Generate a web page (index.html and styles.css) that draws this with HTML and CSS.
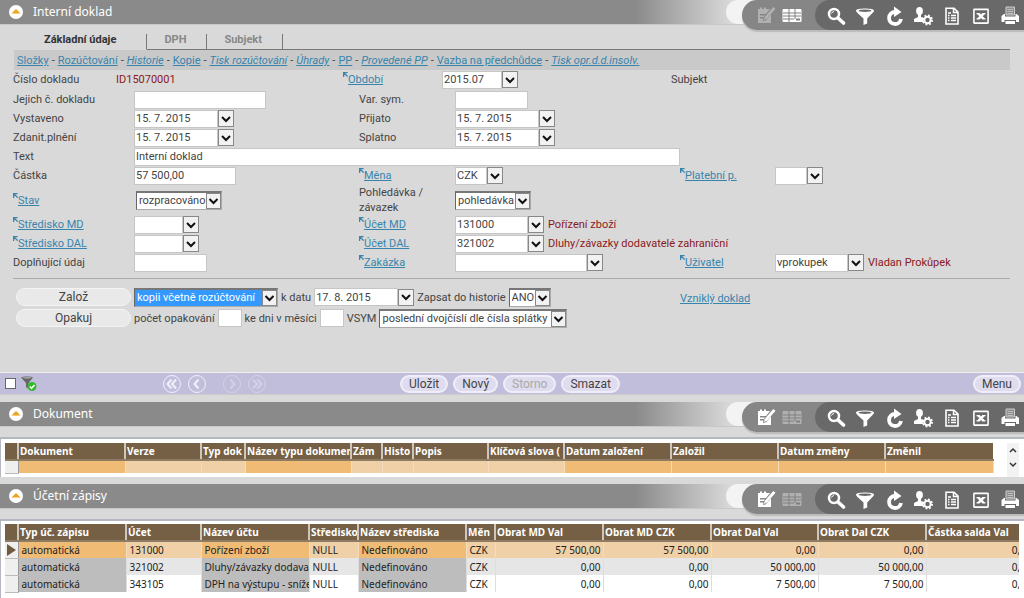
FILE: index.html
```
<!DOCTYPE html>
<html lang="cs">
<head>
<meta charset="utf-8">
<title>Interní doklad</title>
<link rel="stylesheet" href="styles.css">
</head>
<body>
<svg class="sprite" aria-hidden="true">
  <symbol id="i-edit" viewBox="0 0 20 20"><path fill="currentColor" d="M2 4h2V2.500h2V4h2V2.500h2V4h4l-4 5H4v1.500h5L8 12H4v1.500h3.500L7 16l3-.8 5-6V18H2z"/><path fill="currentColor" d="M17.300 2l2.200 1.800-8.600 10L8 15l.7-3z"/></symbol>
  <symbol id="i-table" viewBox="0 0 20 20"><rect x="0.500" y="4" width="19" height="13" rx="1" fill="currentColor"/><path d="M1 8h18M1 11h18M1 14h11M7 4v13M13 4v10" stroke="#808080" stroke-width="1"/><path d="M14 13.500h4v2h-4z" fill="#808080"/></symbol>
  <symbol id="i-search" viewBox="0 0 20 20"><circle cx="8" cy="8" r="5" fill="none" stroke="currentColor" stroke-width="2.500"/><path d="M12 12l5.500 5" stroke="currentColor" stroke-width="3.600" stroke-linecap="round"/><path d="M5.500 7.500q.8-2 2.500-2" stroke="currentColor" fill="none"/></symbol>
  <symbol id="i-filter" viewBox="0 0 20 20"><path fill="currentColor" d="M1 4.500C1 1.800 19 1.800 19 4.500c0 1-1 2-2 3l-4.800 5v5l-3.700 1.500v-6.500L3 7.500c-1-1-2-2-2-3z"/><ellipse cx="10" cy="4.700" rx="6.500" ry="1.300" fill="#696969"/></symbol>
  <symbol id="i-refresh" viewBox="0 0 20 20"><path d="M11 6a6 6 0 1 0 6 7" fill="none" stroke="currentColor" stroke-width="3.800"/><path d="M10 .5l7.500 5.500-7.500 5z" fill="currentColor"/></symbol>
  <symbol id="i-user" viewBox="0 0 20 20"><ellipse cx="6.500" cy="5" rx="3.400" ry="4" fill="currentColor"/><path d="M5 7h3v4l3 1-1 4H1v-3l4-2z" fill="currentColor"/><circle cx="14.500" cy="14" r="3.200" fill="none" stroke="currentColor" stroke-width="2"/><circle cx="14.500" cy="14" r="4.600" fill="none" stroke="currentColor" stroke-width="1.800" stroke-dasharray="1.800 1.812"/></symbol>
  <symbol id="i-doc" viewBox="0 0 20 20"><path d="M4 2.200h8l4 4V18H4z" fill="none" stroke="currentColor" stroke-width="1.600"/><path d="M11.500 2v4.500H16M6 7h3M6 9.500h1.500M9 9.500h5M6 12h1.500M9 12h5M6 14.500h1.500M9 14.500h5" fill="none" stroke="currentColor" stroke-width="1.500"/></symbol>
  <symbol id="i-xls" viewBox="0 0 20 20"><rect x="2.900" y="3.400" width="14.200" height="13.700" rx=".5" fill="none" stroke="currentColor" stroke-width="1.600"/><path d="M5.500 7h3.200L10 8.600 11.300 7h3.200v1.300h-.8l-2 2 2 2h.8v1.300h-3.200L10 12l-1.300 1.600H5.500v-1.300h.8l2-2-2-2h-.8z" fill="currentColor"/></symbol>
  <symbol id="i-print" viewBox="0 0 20 20"><path d="M6 1h8.500v8H6z" fill="#8c8c8c" stroke="#cfcfcf" stroke-width="1"/><path d="M7.500 3.500h5.500M7.500 5.500h5.500M7.500 7.500h5.500" stroke="#cfcfcf" stroke-width=".8"/><path d="M1.500 10L4 8h1v2.500h10.500V8h1l2.500 2v6h-3v-2H4.500v2h-3z" fill="currentColor"/><path d="M5.500 15h9.500v3H5.500z" fill="currentColor"/></symbol>
  <symbol id="i-up" viewBox="0 0 14 14"><circle cx="7" cy="7" r="7" fill="#fff"/><path d="M2.500 8.600L7 4l4.500 4.600z" fill="#eba21c"/></symbol>
  <symbol id="i-ref" viewBox="0 0 6 6"><path d="M.7 6V.7H5.500M1 1l4.500 4.500" fill="none" stroke="#3785ad" stroke-width="1.500"/></symbol>
  <symbol id="i-drop" viewBox="0 0 12 12"><path d="M2 4l4 4 4-4" fill="none" stroke="#111" stroke-width="2"/></symbol>
</svg>

<header class="bar">
  <button class="fold" aria-label="Sbalit"><svg><use href="#i-up"/></svg></button>
  <h1>Interní doklad</h1>
  <div class="tail"><div class="capsule">
    <button class="off" aria-label="Upravit"><svg><use href="#i-edit"/></svg></button>
    <button aria-label="Tabulka"><svg><use href="#i-table"/></svg></button>
    <div class="tools">
      <button aria-label="Hledat"><svg><use href="#i-search"/></svg></button>
      <button aria-label="Filtr"><svg><use href="#i-filter"/></svg></button>
      <button aria-label="Obnovit"><svg><use href="#i-refresh"/></svg></button>
      <button aria-label="Nastavení"><svg><use href="#i-user"/></svg></button>
      <button aria-label="Sestava"><svg><use href="#i-doc"/></svg></button>
      <button aria-label="Excel"><svg><use href="#i-xls"/></svg></button>
      <button aria-label="Tisk"><svg><use href="#i-print"/></svg></button>
    </div>
  </div></div>
</header>

<main class="form">
  <nav class="tabs">
    <a class="tab active" href="#">Základní údaje</a>
    <a class="tab" href="#">DPH</a>
    <a class="tab" href="#">Subjekt</a>
    <span class="rest"></span>
  </nav>
  <nav class="links">
    <a href="#">Složky</a><span>-</span><a href="#">Rozúčtování</a><span>-</span><a href="#"><i>Historie</i></a><span>-</span><a href="#">Kopie</a><span>-</span><a href="#"><i>Tisk rozúčtování</i></a><span>-</span><a href="#"><i>Úhrady</i></a><span>-</span><a href="#">PP</a><span>-</span><a href="#"><i>Provedené PP</i></a><span>-</span><a href="#">Vazba na předchůdce</a><span>-</span><a href="#"><i>Tisk opr.d.d.insolv.</i></a>
  </nav>

  <div class="grid head">
    <span>Číslo dokladu</span>
    <span class="note">ID15070001</span>
    <label for="obdobi"><svg class="ref"><use href="#i-ref"/></svg><a href="#">Období</a></label>
    <span class="combo"><input id="obdobi" class="w60" value="2015.07"><button aria-label="Vybrat"><svg><use href="#i-drop"/></svg></button></span>
    <span>Subjekt</span>
  </div>

  <div class="grid fields">
    <label class="c1" for="jejich">Jejich č. dokladu</label><span><input id="jejich" class="w132"></span>
    <label class="c3" for="vs">Var. sym.</label><span><input id="vs" class="w73"></span>

    <label class="c1" for="vyst">Vystaveno</label><span class="combo"><input id="vyst" class="w84" value="15. 7. 2015"><button aria-label="Vybrat"><svg><use href="#i-drop"/></svg></button></span>
    <label class="c3" for="prij">Přijato</label><span class="combo"><input id="prij" class="w84" value="15. 7. 2015"><button aria-label="Vybrat"><svg><use href="#i-drop"/></svg></button></span>

    <label class="c1" for="zdan">Zdanit.plnění</label><span class="combo"><input id="zdan" class="w84" value="15. 7. 2015"><button aria-label="Vybrat"><svg><use href="#i-drop"/></svg></button></span>
    <label class="c3" for="spl">Splatno</label><span class="combo"><input id="spl" class="w84" value="15. 7. 2015"><button aria-label="Vybrat"><svg><use href="#i-drop"/></svg></button></span>

    <label class="c1" for="text">Text</label><span class="span3"><input id="text" class="wfull" value="Interní doklad"></span>

    <label class="c1" for="castka">Částka</label><span><input id="castka" class="w102" value="57 500,00"></span>
    <label class="c3" for="mena"><svg class="ref"><use href="#i-ref"/></svg><a href="#">Měna</a></label><span class="combo"><input id="mena" class="w32" value="CZK"><button aria-label="Vybrat"><svg><use href="#i-drop"/></svg></button></span>
    <label for="plat"><svg class="ref"><use href="#i-ref"/></svg><a href="#">Platební p.</a></label><span class="combo"><input id="plat" class="w32"><button aria-label="Vybrat"><svg><use href="#i-drop"/></svg></button></span>

    <label class="c1" for="stav"><svg class="ref"><use href="#i-ref"/></svg><a href="#">Stav</a></label><span class="shift"><select id="stav" class="sel s86"><option>rozpracováno</option></select></span>
    <label class="c3" for="pohl">Pohledávka /<br>závazek</label><span><select id="pohl" class="sel s76"><option>pohledávka</option></select></span>

    <label class="c1" for="smd"><svg class="ref"><use href="#i-ref"/></svg><a href="#">Středisko MD</a></label><span class="combo"><input id="smd" class="w49"><button aria-label="Vybrat"><svg><use href="#i-drop"/></svg></button></span>
    <label class="c3" for="umd"><svg class="ref"><use href="#i-ref"/></svg><a href="#">Účet MD</a></label><span class="combo"><input id="umd" class="w73" value="131000"><button aria-label="Vybrat"><svg><use href="#i-drop"/></svg></button><span class="note">Pořízení zboží</span></span>

    <label class="c1" for="sdal"><svg class="ref"><use href="#i-ref"/></svg><a href="#">Středisko DAL</a></label><span class="combo"><input id="sdal" class="w49"><button aria-label="Vybrat"><svg><use href="#i-drop"/></svg></button></span>
    <label class="c3" for="udal"><svg class="ref"><use href="#i-ref"/></svg><a href="#">Účet DAL</a></label><span class="combo"><input id="udal" class="w73" value="321002"><button aria-label="Vybrat"><svg><use href="#i-drop"/></svg></button><span class="note">Dluhy/závazky dodavatelé zahraniční</span></span>

    <label class="c1" for="dopl">Doplňující údaj</label><span><input id="dopl" class="w73"></span>
    <label class="c3" for="zak"><svg class="ref"><use href="#i-ref"/></svg><a href="#">Zakázka</a></label><span class="combo"><input id="zak" class="w132"><button aria-label="Vybrat"><svg><use href="#i-drop"/></svg></button></span>
    <label for="uziv"><svg class="ref"><use href="#i-ref"/></svg><a href="#">Uživatel</a></label><span class="combo"><input id="uziv" class="w73" value="vprokupek"><button aria-label="Vybrat"><svg><use href="#i-drop"/></svg></button><span class="note">Vladan Prokůpek</span></span>
  </div>

  <hr>

  <div class="actions">
    <div class="main">
      <div class="line"><button class="pill wide">Založ</button>
        <select class="sel hot s144" aria-label="Co založit"><option>kopii včetně rozúčtování</option></select>
        <label for="kdatu">k datu</label><span class="combo"><input id="kdatu" class="w84" value="17. 8. 2015"><button aria-label="Vybrat"><svg><use href="#i-drop"/></svg></button></span>
        <label for="hist">Zapsat do historie</label><select id="hist" class="sel s42"><option>ANO</option></select></div>
      <div class="line"><button class="pill wide">Opakuj</button>
        <label for="pocet">počet opakování</label><input id="pocet" class="w24">
        <label for="kedni">ke dni v měsíci</label><input id="kedni" class="w24">
        <label for="vsym">VSYM</label><select id="vsym" class="sel s184"><option>poslední dvojčíslí dle čísla splátky</option></select></div>
    </div>
    <a href="#">Vzniklý doklad</a>
  </div>
</main>

<div class="status">
  <input type="checkbox" aria-label="Použít filtr">
  <svg class="fcheck" viewBox="0 0 16 16"><path d="M0 1.500C1 0 11 0 12 1.500L7.500 7v6L5 11V7z" fill="#666"/><ellipse cx="6" cy="1.700" rx="4.500" ry=".8" fill="#aaa"/><circle cx="11" cy="10.500" r="4.500" fill="#35b92c"/><path d="M8.800 10.500l1.700 1.800 3-3.300" stroke="#fff" stroke-width="1.500" fill="none"/></svg>
  <div class="pager">
    <button aria-label="První"><svg viewBox="0 0 20 20"><circle cx="10" cy="10" r="8.500"/><path class="chev" d="M9.500 5.500L5.500 10l4 4.500M14 5.500L10 10l4 4.500"/></svg></button>
    <button aria-label="Předchozí"><svg viewBox="0 0 20 20"><circle cx="10" cy="10" r="8.500"/><path class="chev" d="M11.500 5.500L7.500 10l4 4.500"/></svg></button>
    <button class="next dim" aria-label="Další"><svg viewBox="0 0 20 20"><circle cx="10" cy="10" r="8.500"/><path class="chev" d="M8.500 5.500l4 4.500-4 4.500"/></svg></button>
    <button class="dim" aria-label="Poslední"><svg viewBox="0 0 20 20"><circle cx="10" cy="10" r="8.500"/><path class="chev" d="M6 5.500l4 4.500-4 4.500M10.500 5.500l4 4.500-4 4.500"/></svg></button>
  </div>
  <div class="cmds">
    <button class="pill">Uložit</button><button class="pill">Nový</button><button class="pill" disabled>Storno</button><button class="pill">Smazat</button>
  </div>
  <button class="pill menu">Menu</button>
</div>

<header class="bar">
  <button class="fold" aria-label="Sbalit"><svg><use href="#i-up"/></svg></button>
  <h2>Dokument</h2>
  <div class="tail"><div class="capsule">
    <button aria-label="Upravit"><svg><use href="#i-edit"/></svg></button>
    <button class="off" aria-label="Tabulka"><svg><use href="#i-table"/></svg></button>
    <div class="tools">
      <button aria-label="Hledat"><svg><use href="#i-search"/></svg></button>
      <button aria-label="Filtr"><svg><use href="#i-filter"/></svg></button>
      <button aria-label="Obnovit"><svg><use href="#i-refresh"/></svg></button>
      <button aria-label="Nastavení"><svg><use href="#i-user"/></svg></button>
      <button aria-label="Sestava"><svg><use href="#i-doc"/></svg></button>
      <button aria-label="Excel"><svg><use href="#i-xls"/></svg></button>
      <button aria-label="Tisk"><svg><use href="#i-print"/></svg></button>
    </div>
  </div></div>
</header>

<section class="sheet docs">
  <div class="clip">
  <table class="t-docs">
    <colgroup><col class="k13"><col class="k107"><col class="k76"><col class="k44"><col class="k106"><col class="k31"><col class="k31"><col class="k75"><col class="k76"><col class="k107"><col class="k107"><col class="k107"><col class="k108"></colgroup>
    <thead><tr><th></th><th>Dokument</th><th>Verze</th><th>Typ dok</th><th>Název typu dokumen</th><th>Zám</th><th>Histo</th><th>Popis</th><th>Klíčová slova (</th><th>Datum založení</th><th>Založil</th><th>Datum změny</th><th>Změnil</th></tr></thead>
    <tbody><tr class="cur"><th class="mark"></th><td class="key"></td><td></td><td></td><td class="key"></td><td></td><td></td><td></td><td></td><td class="key"></td><td class="key"></td><td class="key"></td><td class="key"></td></tr></tbody>
  </table>
  </div>
  <div class="scroll">
    <button aria-label="Nahoru"><svg viewBox="0 0 12 15"><path d="M3 9l3-3 3 3"/></svg></button>
    <button aria-label="Dolů"><svg viewBox="0 0 12 15"><path d="M3 5l3 3 3-3"/></svg></button>
  </div>
</section>

<header class="bar">
  <button class="fold" aria-label="Sbalit"><svg><use href="#i-up"/></svg></button>
  <h2>Účetní zápisy</h2>
  <div class="tail"><div class="capsule">
    <button aria-label="Upravit"><svg><use href="#i-edit"/></svg></button>
    <button class="off" aria-label="Tabulka"><svg><use href="#i-table"/></svg></button>
    <div class="tools">
      <button aria-label="Hledat"><svg><use href="#i-search"/></svg></button>
      <button aria-label="Filtr"><svg><use href="#i-filter"/></svg></button>
      <button aria-label="Obnovit"><svg><use href="#i-refresh"/></svg></button>
      <button aria-label="Nastavení"><svg><use href="#i-user"/></svg></button>
      <button aria-label="Sestava"><svg><use href="#i-doc"/></svg></button>
      <button aria-label="Excel"><svg><use href="#i-xls"/></svg></button>
      <button aria-label="Tisk"><svg><use href="#i-print"/></svg></button>
    </div>
  </div></div>
</header>

<section class="sheet entries">
  <div class="clip">
  <table class="t-entries">
    <colgroup><col class="k13"><col class="k108"><col class="k75"><col class="k108"><col class="k49"><col class="k108"><col class="k29"><col class="k108"><col class="k108"><col class="k107"><col class="k108"><col class="k108"></colgroup>
    <thead><tr><th></th><th>Typ úč. zápisu</th><th>Účet</th><th>Název účtu</th><th>Středisko</th><th>Název střediska</th><th>Měn</th><th>Obrat MD Val</th><th>Obrat MD CZK</th><th>Obrat Dal Val</th><th>Obrat Dal CZK</th><th>Částka salda Val</th></tr></thead>
    <tbody>
      <tr class="cur"><th class="mark"><svg viewBox="0 0 10 12"><path d="M1 0l9 6-9 6z" fill="#6f5a3e"/></svg></th><td class="key">automatická</td><td>131000</td><td class="key">Pořízení zboží</td><td>NULL</td><td class="key">Nedefinováno</td><td>CZK</td><td class="num">57 500,00</td><td class="num">57 500,00</td><td class="num">0,00</td><td class="num">0,00</td><td class="num">0,00</td></tr>
      <tr class="even"><th class="mark"></th><td class="key">automatická</td><td>321002</td><td class="key">Dluhy/závazky dodavat</td><td>NULL</td><td class="key">Nedefinováno</td><td>CZK</td><td class="num">0,00</td><td class="num">0,00</td><td class="num">50 000,00</td><td class="num">50 000,00</td><td class="num">0,00</td></tr>
      <tr><th class="mark"></th><td class="key">automatická</td><td>343105</td><td class="key">DPH na výstupu - sníže</td><td>NULL</td><td class="key">Nedefinováno</td><td>CZK</td><td class="num">0,00</td><td class="num">0,00</td><td class="num">7 500,00</td><td class="num">7 500,00</td><td class="num">0,00</td></tr>
    </tbody>
  </table>
  </div>
</section>
</body>
</html>
```
FILE: styles.css
```
* { box-sizing: border-box; }
html { background: #d9d9d9; }
body {
  margin: 0;
  min-height: 100vh;
  display: flex;
  flex-direction: column;
  overflow: hidden;
  color: #444;
  font: 11px/15px Roboto, "Noto Sans", sans-serif;
}
.sprite { display: none; }
button, input, select { font: inherit; color: inherit; margin: 0; }
button { border: 0; padding: 0; background: none; }
a { color: #3785ad; }

/* section title bars */
.bar {
  display: flex;
  align-items: center;
  height: 25px;
  flex: none;
  padding-left: 9px;
  background: linear-gradient(to right, #8a8a8a 62%, #dedede 72%, #e4e4e4);
  border-bottom: 1px solid #c8c8c8;
}
.fold, .fold svg { display: block; width: 14px; height: 14px; }
.bar h1, .bar h2 {
  flex: 1;
  margin: 0 0 0 10px;
  color: #fff;
  font: 400 12px/24px "Noto Sans", sans-serif;
}
.tail {
  align-self: flex-start;
  height: 24px;
  padding-left: 16px;
  background: #f3f3f3;
  border-radius: 14px 0 0 14px;
}
.capsule {
  display: flex;
  align-items: center;
  height: 30px;
  padding-left: 11px;
  background: #868686;
  border-radius: 15px 0 0 15px;
  box-shadow: 0 2px 1px #bbb;
  color: #fff;
}
.capsule button { width: 26px; height: 20px; }
.capsule svg { display: block; width: 20px; height: 20px; margin: auto; }
.capsule .off { color: #b0b0b0; }
.tools {
  display: flex;
  align-items: center;
  height: 30px;
  margin-left: 10px;
  padding: 1px 0 0 6px;
  background: #696969;
  border-radius: 15px 0 0 15px;
}
.tools button { width: 29px; }

/* form */
.form { height: 347px; flex: none; padding-top: 9px; }
.tabs { display: flex; margin-right: 14px; }
.tab {
  height: 16px;
  border-right: 1px solid #777;
  border-bottom: 1px solid #777;
  padding: 0 20px 0 17px;
  line-height: 11px;
  font-weight: 700;
  color: #888;
  text-decoration: none;
}
.tab.active { padding: 0 30px 0 44px; color: #333; border-bottom-color: transparent; }
.rest { flex: 1; border-bottom: 1px solid #777; }
.links { display: flex; gap: 3px; margin: 0 14px; padding: 3px 3px 2px; background: #c9c9c9; white-space: nowrap; }
.grid { display: grid; align-items: center; padding-left: 13px; white-space: nowrap; }
.head { grid-template-columns: 103px 227px 99px 229px 1fr; min-height: 19px; }
.fields { grid-template-columns: 121px 225px 96px 225px 95px 1fr; grid-auto-rows: minmax(19px, auto); padding-top: 1px; }
.c1 { grid-column: 1; }
.c3 { grid-column: 3; }
.span3 { grid-column: 2 / 5; }
.grid > span { display: flex; align-items: center; }
.grid > .shift { padding-left: 2px; }
.ref { width: 5px; height: 5px; vertical-align: 6px; }
.note { color: #8b1a1a; }
input:not([type]) {
  height: 18px;
  padding: 0 1px;
  background: #fff;
  border: 1px solid #c6c6c6;
}
.combo { display: flex; align-items: center; }
.combo button {
  width: 16px;
  height: 17px;
  flex: none;
  background: #f2f2f2;
  border: 1px solid #888;
}
.combo svg { display: block; width: 12px; height: 12px; margin: auto; }
.combo .note { margin-left: 4px; }
.w24 { width: 24px; }
.w32 { width: 32px; }
.w49 { width: 49px; }
.w60 { width: 60px; }
.w73 { width: 73px; }
.w84 { width: 84px; }
.w102 { width: 102px; }
.w132 { width: 132px; }
.wfull { width: 100%; }
.sel {
  appearance: none;
  height: 19px;
  padding: 0 15px 0 2px;
  border: 1px solid #aaa;
  border-top: 2px solid #777;
  border-left: 1px solid #666;
  border-radius: 0;
  background: #fff url("data:image/svg+xml,%3Csvg xmlns='http://www.w3.org/2000/svg' width='15' height='16'%3E%3Crect x='.5' y='.5' width='14' height='15' fill='%23f2f2f2' stroke='%23888'/%3E%3Cpath d='M3.500 6l4 4 4-4' fill='none' stroke='%23111' stroke-width='2'/%3E%3C/svg%3E") right center no-repeat;
}
.hot { color: #fff; background-color: #3399ff; }
.s42 { width: 42px; }
.s76 { width: 76px; }
.s86 { width: 86px; }
.s144 { width: 144px; }
.s184 { width: 188px; }
hr { height: 1px; margin: 6px 14px 8px 13px; border: 0; background: #aaa; }
.actions { display: grid; grid-template-columns: 664px 1fr; padding-left: 16px; white-space: nowrap; }
.actions > a { padding-top: 4px; }
.main { display: grid; gap: 1px; }
.line { display: flex; align-items: center; gap: 3px; height: 20px; }
.pill {
  height: 18px;
  padding: 0 8px;
  border: 1px solid #f4f4f4;
  border-radius: 9px;
  background: #e9e9e9;
  font-size: 12px;
  line-height: 16px;
}
.wide { width: 115px; }

/* record status bar */
.status {
  display: flex;
  align-items: center;
  flex: none;
  height: 23px;
  margin-bottom: 7px;
  padding: 0 3px 0 5px;
  border-top: 1px solid #eee;
  border-bottom: 1px solid #ccc;
  background: #c1bedc;
}
.status input {
  appearance: none;
  width: 11px;
  height: 11px;
  margin: 0 5px 0 0;
  background: #fff;
  border: 1px solid #666;
}
.fcheck { width: 16px; height: 16px; }
.pager { display: flex; gap: 5px; margin-left: 125px; }
.pager button, .pager svg { display: block; width: 20px; height: 20px; }
.pager svg { fill: none; stroke: #f1f0fa; }
.pager .chev { stroke-width: 2; }
.pager .dim { opacity: .4; }
.pager .next { margin-left: 10px; }
.cmds { display: flex; gap: 5px; margin-left: 133px; }
.status .pill { padding: 0 7px; background: #dedcee; border: 2px solid #efeef8; line-height: 14px; }
.status .pill:disabled { color: #aaa; }
.status .menu { margin-left: auto; }

/* data sheets */
.sheet {
  display: flex;
  margin-top: 10px;
  padding-left: 4px;
  border-top: 2px solid #b4b8c0;
  border-left: 1px solid #b4b8c0;
  background: #fff;
  font: 10px/16px "Noto Sans", "Open Sans", sans-serif;
  color: #222;
}
.docs { height: 40px; flex: none; padding-top: 4px; margin-bottom: 7px; }
.entries { flex: 1; padding-top: 3px; }
.clip { flex: 1; overflow: hidden; margin-right: 5px; }
table { table-layout: fixed; border-collapse: collapse; width: 0; }
td, th {
  height: 17px;
  padding: 0 2px 0 3px;
  overflow: hidden;
  white-space: nowrap;
  text-align: left;
  font-weight: 400;
}
td.key { padding-right: 0; }
thead th {
  height: 17px;
  padding: 0 0 0 1px;
  background: #755f45;
  border-left: 2px solid #cfc6ba;
  border-bottom: 2px solid #8d7b64;
  color: #fff;
  font-weight: 700;
  line-height: 15px;
}
thead th:first-child { border-left: 0; }
td { border-right: 1px solid #ddd; }
.t-docs tbody td, .t-docs tbody th { height: 13px; }
.cur td { background: #f0d0a6; border-right-color: #f4dcbc; }
.cur td.key { background: #f0bb75; }
.even td { background: #e6e6e6; }
.key { background: #bdbdbd; }
.even td.key { background: #bdbdbd; }
.num { text-align: right; }
.mark { background: #efefef; padding: 0 1px; border-right: 1px solid #999; border-bottom: 1px solid #bbb; }
.mark svg { display: block; width: 10px; height: 12px; }
.k13 { width: 13px; }
.k29 { width: 29px; }
.k31 { width: 31px; }
.k44 { width: 44px; }
.k49 { width: 49px; }
.k75 { width: 75px; }
.k76 { width: 76px; }
.k106 { width: 106px; }
.k107 { width: 107px; }
.k108 { width: 108px; }
.scroll { width: 12px; margin-right: 5px; background: #f2f2f2; }
.scroll button, .scroll svg { display: block; width: 12px; height: 15px; }
.scroll path { fill: none; stroke: #333; stroke-width: 1.500; }
```
